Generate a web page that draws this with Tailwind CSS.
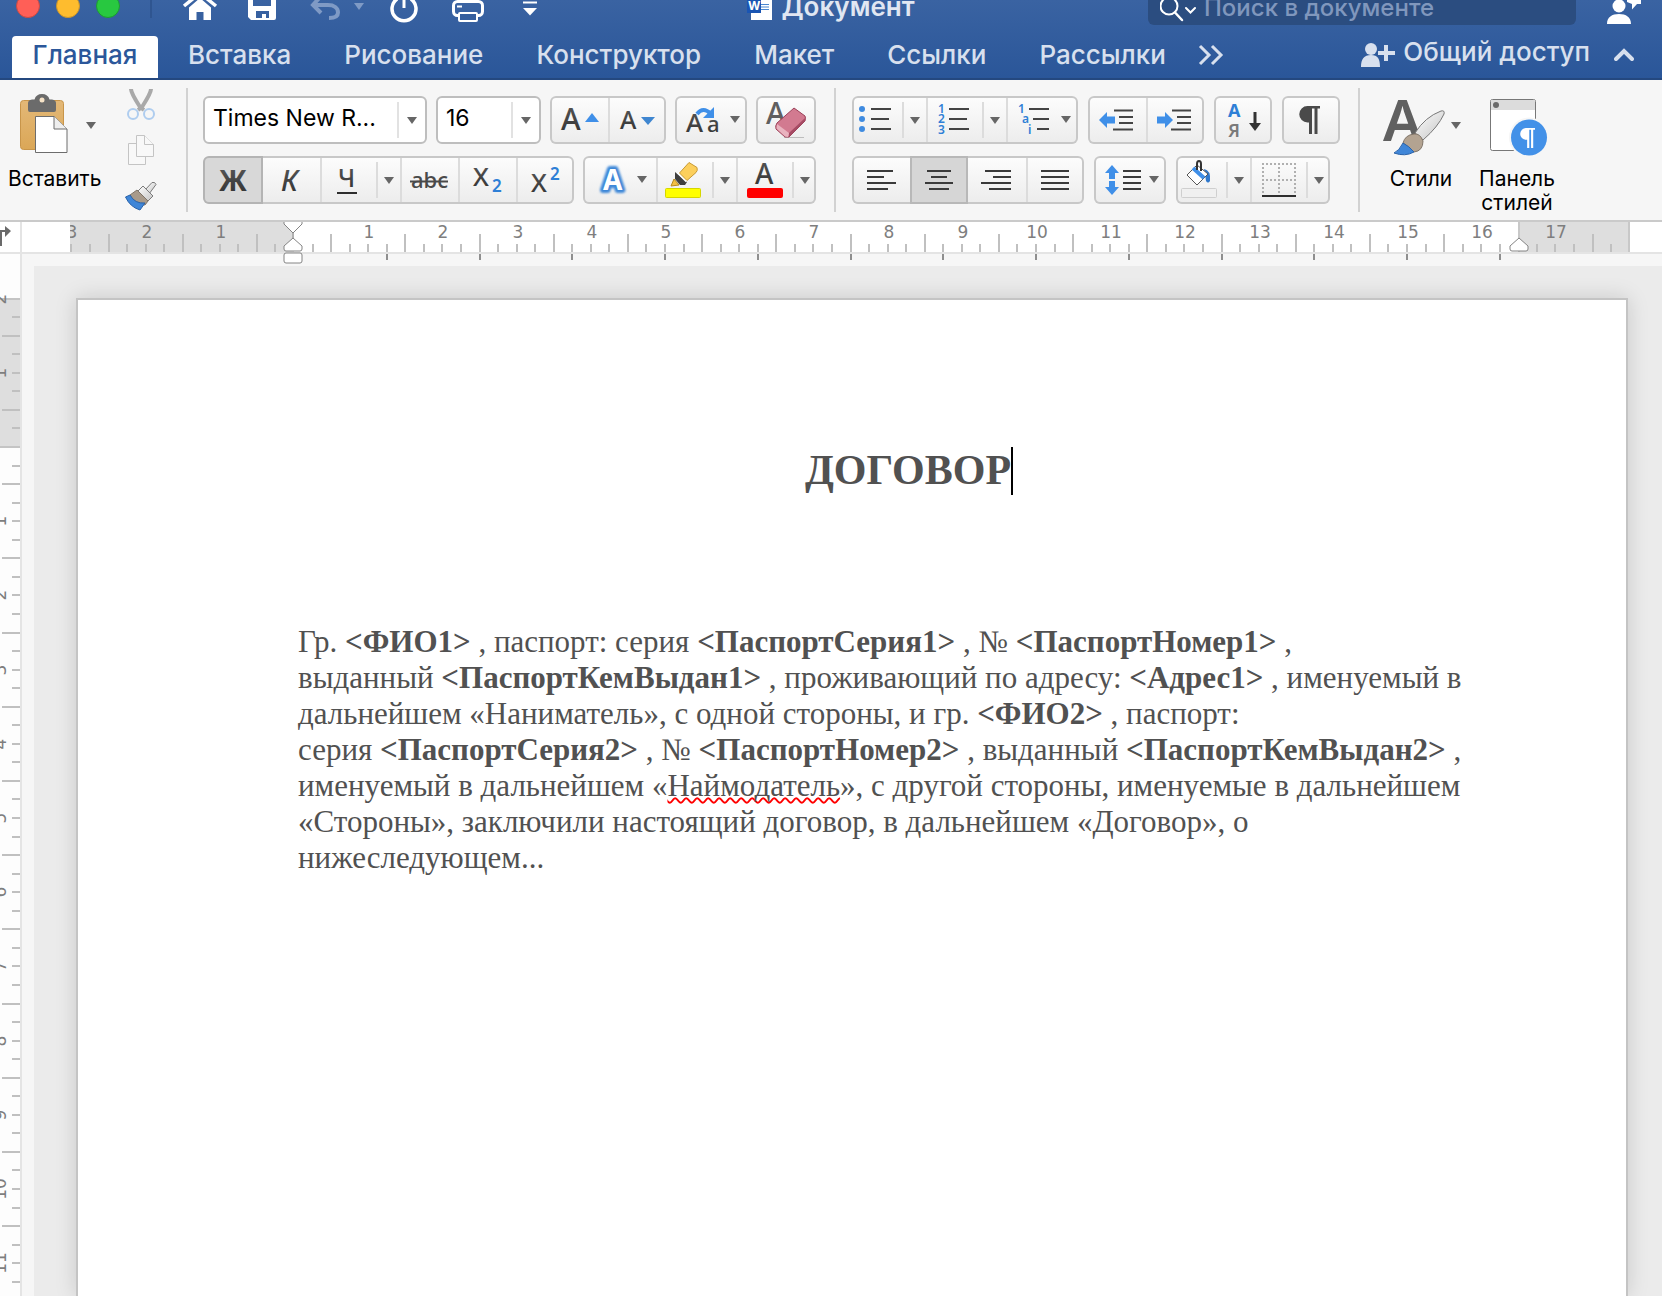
<!DOCTYPE html>
<html lang="ru">
<head>
<meta charset="utf-8">
<title>Документ</title>
<script src="https://cdn.jsdelivr.net/npm/@tailwindcss/browser@4"></script>
</head>
<body class="flex min-h-screen flex-col overflow-x-hidden bg-[#f6f6f6] font-['Inter','Noto_Sans',sans-serif] text-black">

<svg class="absolute size-0" aria-hidden="true">
  <defs>
    <linearGradient id="ink" x1="0" y1="0" x2="0" y2="1"><stop offset="0" stop-color="#5c5c5c"/><stop offset="1" stop-color="#2e2e2e"/></linearGradient>
    <linearGradient id="board" x1="0" y1="0" x2="0" y2="1"><stop offset="0" stop-color="#e3b877"/><stop offset="1" stop-color="#dba757"/></linearGradient>
    <linearGradient id="metal" x1="0" y1="0" x2="1" y2="1"><stop offset="0" stop-color="#ffffff"/><stop offset="1" stop-color="#c4c4c4"/></linearGradient>
    <filter id="glow" x="-50%" y="-50%" width="200%" height="200%"><feGaussianBlur stdDeviation="1"/></filter>
    <symbol id="caret" viewBox="0 0 10 7"><path d="M0 0h10L5 7z" fill="#666"/></symbol>
    <symbol id="pilcrow" viewBox="0 0 21 28"><path d="M21 0v2.500h-2.500V28h-3V2.500h-2.500V28H10V16.500H8.500a8.250 8.250 0 0 1 0-16.500z"/></symbol>
  </defs>
</svg>

<header class="flex h-20 flex-col overflow-hidden border-b-2 border-[#24487f] bg-linear-to-b from-[#3a63a2] to-[#2a5699] text-[#d8e0ee]">
  <div class="flex h-9 shrink-0 items-start">
    <div class="flex flex-1 items-start">
      <div class="flex w-[152px] items-start gap-4 border-r-2 border-[#2f5590] pl-4">
        <button aria-label="Закрыть" class="-mt-[6px] size-6 rounded-full border border-[#c94a43] bg-[#ff5f57]"></button>
        <button aria-label="Свернуть" class="-mt-[6px] size-6 rounded-full border border-[#c9942c] bg-[#febc2e]"></button>
        <button aria-label="Развернуть" class="-mt-[6px] size-6 rounded-full border border-[#1d9a32] bg-[#28c840]"></button>
      </div>
      <button aria-label="Домой" class="ml-[30px]"><svg width="36" height="24" fill="none"><path d="M2 6 18-7 34 6" stroke="#fff" stroke-width="3.500"/><path d="M7 7.500 18-2l11 9.500V20h-7.500v-8h-7v8H7z" fill="#fff"/></svg></button>
      <button aria-label="Сохранить" class="ml-[26px]"><svg width="36" height="24"><path fill="#fff" fill-rule="evenodd" d="M4-8h28v26a2 2 0 0 1-2 2H7l-3-3zM9-8V6h18V-8zM12 11v7h6v-4h4v4h3v-7z"/></svg></button>
      <button aria-label="Отменить" class="ml-[27px]"><svg width="36" height="24" fill="none" stroke="#7f9ac5" stroke-width="4"><path d="M7 5h14c6 0 10 3 10 7.500S27 18 22 18"/><path d="M14-4 6 5l8 8"/></svg></button>
      <button aria-label="Варианты отмены" class="ml-2"><svg width="16" height="24"><path d="M3 3h10L8 10z" fill="#7f9ac5"/></svg></button>
      <button aria-label="Повторить" class="ml-[19px]"><svg width="36" height="24" fill="none" stroke="#fff"><path d="M11-1a12 12 0 1 0 14 0" stroke-width="3.500"/><path d="M18-4V8" stroke-width="3"/></svg></button>
      <button aria-label="Печать" class="ml-7"><svg width="36" height="24"><rect x="3.500" y="1.500" width="29" height="14" rx="4" fill="none" stroke="#fff" stroke-width="3"/><path d="M7-4h22" stroke="#fff" stroke-width="6"/><rect x="9" y="13" width="18" height="8" rx="1" fill="#345e9e" stroke="#fff" stroke-width="2"/><path d="M7 6.500h5" stroke="#fff" stroke-width="2"/></svg></button>
      <button aria-label="Настроить панель" class="ml-[26px]"><svg width="36" height="24"><path d="M11 2.500h14" stroke="#fff" stroke-width="2"/><path d="M11 8h14l-7 7.500z" fill="#fff"/></svg></button>
    </div>
    <div class="flex items-start gap-2">
      <svg width="26" height="24"><rect x="4" y="-6" width="21" height="26" fill="#fff"/><path d="M14 4.500h8M14 7h8M14 9.500h8" stroke="#4a86d0" stroke-width="1"/><rect x="0" y="-4" width="14" height="17" fill="#1a55b3"/><text x="1" y="10" font-size="12" font-weight="700" fill="#fff" font-family="Inter">W</text></svg>
      <h1 class="text-[26px] leading-[14px] font-semibold text-[#e1e7f2]">Документ</h1>
    </div>
    <div class="flex flex-1 items-start justify-end">
      <label class="-mt-[10px] flex h-[35px] w-[428px] items-center gap-2 rounded-md bg-[#2b4d80] pl-3">
        <svg class="mt-1 shrink-0" width="36" height="30" fill="none" stroke="#fff" stroke-linecap="round"><circle cx="9" cy="11" r="8.500" stroke-width="2"/><path d="m15 17.500 7 7.500" stroke-width="2.500"/><path d="m26 13 4.500 4.500L35 13" stroke-width="2"/></svg>
        <input type="search" aria-label="Поиск в документе" placeholder="Поиск в документе" class="w-full bg-transparent text-[24px] leading-[30px] font-medium outline-none placeholder:text-[#8097bd]">
      </label>
      <button aria-label="Учётная запись" class="mr-[18px] ml-[30px]"><svg width="38" height="26" fill="#fff"><circle cx="13" cy="6" r="6.500"/><path d="M1 24c0-7 5-10 12-10s12 3 12 10zM21-4h14v8h-4l-5 5.500V4l-5-2z"/></svg></button>
    </div>
  </div>
  <nav class="flex h-11 shrink-0 items-start pl-3 text-[26px] leading-[37px] font-medium">
    <a href="#" aria-current="page" class="flex h-11 w-[146px] justify-center rounded-t-sm bg-white text-[#2b579a]">Главная</a>
    <a href="#" class="pr-[53px] pl-[30px]">Вставка</a>
    <a href="#" class="pr-[53px]">Рисование</a>
    <a href="#" class="pr-[53px]">Конструктор</a>
    <a href="#" class="pr-[53px]">Макет</a>
    <a href="#" class="pr-[53px]">Ссылки</a>
    <a href="#" class="pr-8">Рассылки</a>
    <button aria-label="Другие вкладки" class="h-9"><svg width="26" height="36" fill="none" stroke="currentColor" stroke-width="3"><path d="m2 10 9 9-9 9M14 10l9 9-9 9"/></svg></button>
    <a href="#" class="ml-auto flex gap-[7px] leading-[32px]"><svg width="36" height="36" fill="currentColor"><circle cx="11" cy="13" r="6"/><path d="M1 31c0-8 3-12 10-12s9 4 9 12zM18 15h6V9h4v6h7v4h-7v6h-4v-6h-6z"/></svg>Общий доступ</a>
    <button aria-label="Свернуть ленту" class="mr-7 ml-6"><svg width="20" height="36" fill="none" stroke="currentColor" stroke-width="4" stroke-linecap="round"><path d="m2 23 8-8 8 8"/></svg></button>
  </nav>
</header>

<div class="flex h-[142px] shrink-0 items-start border-b-2 border-[#cacaca] bg-[#f6f6f6] font-['Noto_Sans','Inter',sans-serif]">
  <button class="mt-[14px] ml-2 flex w-[94px] flex-col items-start font-['Inter',sans-serif] text-[21px] leading-6">
    <svg width="94" height="73">
      <rect x="12.500" y="6.500" width="43" height="49" rx="3" fill="url(#board)" stroke="#c8954a"/>
      <path d="M20 9q0-3 4-3.500h2.500Q28 0 34 0t7.500 5.500H44q4 .500 4 3.500v7q0 2-2 2H22q-2 0-2-2z" fill="#6b6b6b"/><circle cx="34" cy="6" r="2.500" fill="#f6e3c8"/>
      <path d="M27.500 22.500H46L59 35v23.500H27.500z" fill="#fff" stroke="#6d6d6d"/><path d="M46 22.500V35h13" fill="#eee" stroke="#6d6d6d"/>
      <path d="M78 28h10l-5 7z" fill="#666"/>
    </svg>Вставить</button>
  <div class="mt-2 ml-[23px] flex flex-col gap-[14px]">
    <button aria-label="Вырезать"><svg width="32" height="32" fill="none"><path d="M6 1q0 4 9 18l4 3M26 1q0 4-9 18l-4 3" stroke="#a9a9a9" stroke-width="4"/><circle cx="8" cy="26" r="5" stroke="#afcdef" stroke-width="2"/><circle cx="24" cy="26" r="5" stroke="#afcdef" stroke-width="2"/></svg></button>
    <button aria-label="Копировать"><svg width="32" height="32" fill="#f8f8f8" stroke="#c4c4c4"><path d="M3.500 9.500h17v21h-17z"/><path d="M11.500 1.500h8l9 9v12h-17z"/><path d="M19.500 1.500v9h9"/></svg></button>
    <button aria-label="Формат по образцу"><svg width="32" height="32"><path d="m20 10 7-7.500q3-1 4 2L24 14z" fill="url(#metal)" stroke="#7b7b7b"/><path d="m18 6 10 10-5 5-10-10z" fill="url(#metal)" stroke="#7b7b7b"/><path d="m12 10 11 11-3 4Q9 24 5 15z" fill="#a89a8a" stroke="#7f7468"/><path d="M5 15q5 9 15 8l-5 7Q5 27 .500 17z" fill="#3f86d8" stroke="#2a62a8"/></svg></button>
  </div>
  <div class="mt-2 ml-[29px] h-[124px] w-[2px] bg-[#d2d2d2]"></div>

  <div class="mt-4 ml-[15px] flex flex-col gap-3">
    <div class="flex gap-[9px]">
      <div class="relative h-12 w-[224px]">
        <select aria-label="Шрифт" class="size-full appearance-none rounded-md border-2 border-[#bebebe] bg-white pb-1 pl-2 font-['Inter',sans-serif] text-[23px]"><option>Times New R...</option></select>
        <span class="pointer-events-none absolute top-[6px] right-0 flex h-9 w-[30px] items-center border-l-2 border-[#e2e2e2] pl-[8px]"><svg class="h-[7px] w-[10px]"><use href="#caret"/></svg></span>
      </div>
      <div class="relative h-12 w-[105px]">
        <select aria-label="Размер шрифта" class="size-full appearance-none rounded-md border-2 border-[#bebebe] bg-white pb-1 pl-2 font-['Inter',sans-serif] text-[23px]"><option>16</option></select>
        <span class="pointer-events-none absolute top-[6px] right-0 flex h-9 w-[30px] items-center border-l-2 border-[#e2e2e2] pl-[8px]"><svg class="h-[7px] w-[10px]"><use href="#caret"/></svg></span>
      </div>
      <div class="flex h-12 rounded-md bg-linear-to-b from-[#fdfdfd] to-[#ececec] ring-2 ring-[#c8c8c8] ring-inset">
        <button aria-label="Увеличить шрифт"><svg width="58" height="48"><text x="11" y="34" font-size="30" font-weight="500" fill="url(#ink)">A</text><path d="m42 17 7 9H35z" fill="#3f8fe8"/></svg></button>
        <button aria-label="Уменьшить шрифт" class="my-[2px] border-l-2 border-[#dcdcdc]"><svg width="56" height="44"><text x="10" y="31" font-size="25" font-weight="500" fill="url(#ink)">A</text><path d="M31 19h14l-7 8z" fill="#3f86d0"/></svg></button>
      </div>
      <button aria-label="Регистр" class="h-12 rounded-md bg-linear-to-b from-[#fdfdfd] to-[#ececec] ring-2 ring-[#c8c8c8] ring-inset"><svg width="72" height="48"><text x="11" y="36" font-size="26" font-weight="500" fill="url(#ink)">A</text><text x="32" y="36" font-size="22" font-weight="500" fill="url(#ink)">a</text><path d="M22 18q6-8 14 0" fill="none" stroke="#3f8fe8" stroke-width="4"/><path d="M39 11v11H28z" fill="#3f8fe8"/><path d="M55 20h10l-5 7z" fill="#666"/></svg></button>
      <button aria-label="Очистить формат" class="h-12 rounded-md bg-linear-to-b from-[#fdfdfd] to-[#ececec] ring-2 ring-[#c8c8c8] ring-inset"><svg width="60" height="48"><text x="10" y="28" font-size="30" font-weight="500" fill="#5f5f5f">A</text><path d="M28 41.500h20" stroke="#bdbdbd"/><path d="m38 12 11 8q1 2 0 5L33 41h-4l-9-8q-1-3 1-6z" fill="#d27a90" stroke="#9b4058"/><path d="m21 28 12 9-1 4-3-.500-8.500-8z" fill="#e9b3bf"/><path d="m33 37 16-15v3L33 41z" fill="#a64b64"/></svg></button>
    </div>
    <div class="flex gap-[9px]">
      <div class="flex h-12 overflow-hidden rounded-md bg-linear-to-b from-[#fdfdfd] to-[#ececec] ring-2 ring-[#c8c8c8] ring-inset">
        <button aria-label="Полужирный" aria-pressed="true" class="rounded-l-md border-2 border-[#b4b4b4] bg-[#d8d8d8]"><svg width="56" height="44"><text x="14" y="33" font-size="28" font-weight="700" fill="url(#ink)">Ж</text></svg></button>
        <button aria-label="Курсив"><svg width="57" height="48"><text x="18" y="35" font-size="29" font-style="italic" font-weight="500" fill="url(#ink)">К</text></svg></button>
        <button aria-label="Подчёркнутый" class="my-[2px] border-l-2 border-[#dcdcdc]"><svg width="54" height="44"><text x="16" y="29" font-size="25" font-weight="500" fill="url(#ink)">Ч</text><path d="M15 35h20" stroke="#2e2e2e" stroke-width="2"/></svg></button>
        <button aria-label="Вид подчёркивания" class="my-[6px] border-l-2 border-[#dcdcdc] px-[6px]"><svg class="h-[7px] w-[10px]"><use href="#caret"/></svg></button>
        <button aria-label="Зачёркнутый" class="my-[2px] border-l-2 border-[#dcdcdc]"><svg width="56" height="44"><text x="9" y="30" font-size="22" font-weight="500" fill="#4a4a4a">abc</text><path d="M8 23.500h38" stroke="#4a4a4a" stroke-width="2"/></svg></button>
        <button aria-label="Подстрочный" class="my-[2px] border-l-2 border-[#dcdcdc]"><svg width="56" height="44"><text x="13" y="28" font-size="26" font-weight="500" fill="url(#ink)">X</text><text x="32" y="34" font-size="17" font-weight="600" fill="#2e7fd6">2</text></svg></button>
        <button aria-label="Надстрочный" class="my-[2px] border-l-2 border-[#dcdcdc]"><svg width="56" height="44"><text x="13" y="34" font-size="26" font-weight="500" fill="url(#ink)">X</text><text x="32" y="22" font-size="17" font-weight="600" fill="#2e7fd6">2</text></svg></button>
      </div>
      <div class="flex h-12 rounded-md bg-linear-to-b from-[#fdfdfd] to-[#ececec] ring-2 ring-[#c8c8c8] ring-inset">
        <button aria-label="Эффекты текста"><svg width="73" height="48"><text x="20" y="34" font-size="28" font-weight="700" fill="#3d87d8" stroke="#3d87d8" stroke-width="6" stroke-linejoin="round" filter="url(#glow)">A</text><text x="20" y="34" font-size="28" font-weight="700" fill="#fff">A</text><path d="M54 20h10l-5 7z" fill="#666"/></svg></button>
        <button aria-label="Цвет выделения" class="my-[2px] border-l-2 border-[#dcdcdc]"><svg width="54" height="44"><path d="m13 28 3-7 5 6z" fill="#f3c044" stroke="#b98a1e"/><path d="m17 14 12 10-2 3h-5l-5-6z" fill="#3f3f3f"/><path d="m19.500 14.500 9 9" stroke="#fff" stroke-width="2"/><path d="m31 4.500 8 5q1 3-1 5l-9 8-7.500-7.500z" fill="#fccf5c" stroke="#c89a34"/><rect x="7.500" y="30.500" width="35" height="9" rx="1" fill="#ff0" stroke="#d6d600"/></svg></button>
        <button aria-label="Выбрать цвет выделения" class="my-[6px] border-l-2 border-[#dcdcdc] px-[6px]"><svg class="h-[7px] w-[10px]"><use href="#caret"/></svg></button>
        <button aria-label="Цвет текста" class="my-[2px] border-l-2 border-[#dcdcdc]"><svg width="54" height="44"><text x="17" y="26" font-size="28" font-weight="500" fill="url(#ink)">A</text><rect x="9" y="30" width="36" height="10" rx="2" fill="#f00"/></svg></button>
        <button aria-label="Выбрать цвет текста" class="my-[6px] border-l-2 border-[#dcdcdc] px-[6px]"><svg class="h-[7px] w-[10px]"><use href="#caret"/></svg></button>
      </div>
    </div>
  </div>
  <div class="mt-2 ml-[18px] h-[124px] w-[2px] bg-[#d2d2d2]"></div>

  <div class="mt-4 ml-4 flex flex-col gap-3">
    <div class="flex gap-[10px]">
      <div class="flex h-12 rounded-md bg-linear-to-b from-[#fdfdfd] to-[#ececec] ring-2 ring-[#c8c8c8] ring-inset">
        <button aria-label="Маркеры"><svg width="50" height="48"><g fill="#3f8be0"><circle cx="10" cy="13" r="3"/><circle cx="10" cy="23" r="3"/><circle cx="10" cy="33" r="3"/></g><path d="M19 13h20M19 23h18M19 33h20" stroke="#444" stroke-width="2"/></svg></button>
        <button aria-label="Вид маркеров" class="my-[6px] border-l-2 border-[#dcdcdc] px-[6px]"><svg class="h-[7px] w-[10px]"><use href="#caret"/></svg></button>
        <button aria-label="Нумерация" class="my-[2px] border-l-2 border-[#dcdcdc]"><svg width="54" height="44"><g font-size="12" font-weight="600" fill="#2e7fd6"><text x="10" y="15">1</text><text x="10" y="25">2</text><text x="10" y="36">3</text></g><path d="M21 11h20M21 21h18M21 31h20" stroke="#444" stroke-width="2"/></svg></button>
        <button aria-label="Вид нумерации" class="my-[6px] border-l-2 border-[#dcdcdc] px-[6px]"><svg class="h-[7px] w-[10px]"><use href="#caret"/></svg></button>
        <button aria-label="Многоуровневый список" class="my-[2px] border-l-2 border-[#dcdcdc]"><svg width="70" height="44"><g font-size="12" font-weight="600" fill="#2e7fd6"><text x="10" y="15">1</text><text x="14" y="25">a</text><text x="20" y="36">i</text></g><path d="M21 11h20M25 21h16M29 31h12" stroke="#444" stroke-width="2"/><path d="M53 18h10l-5 7z" fill="#666"/></svg></button>
      </div>
      <div class="flex h-12 rounded-md bg-linear-to-b from-[#fdfdfd] to-[#ececec] ring-2 ring-[#c8c8c8] ring-inset">
        <button aria-label="Уменьшить отступ"><svg width="58" height="48"><path d="m11 24 8-8v4.500h8v7h-8V32z" fill="#3f8fe8"/><path d="M26 14.500h19M31 21h14M31 27h14M25 33.500h20" stroke="#444" stroke-width="2"/></svg></button>
        <button aria-label="Увеличить отступ" class="my-[2px] border-l-2 border-[#dcdcdc]"><svg width="56" height="44"><path d="m25 22-8-8v4.500H9v7h8V30z" fill="#3f8fe8"/><path d="M24 12.500h19M29 19h14M29 25h14M23 31.500h20" stroke="#444" stroke-width="2"/></svg></button>
      </div>
      <button aria-label="Сортировка" class="h-12 rounded-md bg-linear-to-b from-[#fdfdfd] to-[#ececec] ring-2 ring-[#c8c8c8] ring-inset"><svg width="58" height="48"><text x="14" y="21" font-size="18" font-weight="700" fill="#2e7fd6">А</text><text x="14" y="41" font-size="18" font-weight="600" fill="#7a7a7a">Я</text><path d="M39.500 16h3v11H47l-6 8-6-8h4.500z" fill="#333"/></svg></button>
      <button aria-label="Непечатаемые знаки" class="h-12 rounded-md bg-linear-to-b from-[#fdfdfd] to-[#ececec] ring-2 ring-[#c8c8c8] ring-inset"><svg width="58" height="48"><use href="#pilcrow" x="17" y="10" width="21" height="28" fill="#4a4a4a"/></svg></button>
    </div>
    <div class="flex gap-[10px]">
      <div class="flex h-12 rounded-md bg-linear-to-b from-[#fdfdfd] to-[#ececec] ring-2 ring-[#c8c8c8] ring-inset">
        <button aria-label="По левому краю"><svg width="58" height="48"><path d="M15 15h26M15 21h17M15 27h29M15 33h21" stroke="#3a3a3a" stroke-width="2"/></svg></button>
        <button aria-label="По центру" aria-pressed="true" class="border-2 border-[#b8b8b8] bg-[#d6d6d6]"><svg width="54" height="44"><path d="M15 13h24M19 19h16M13 25h28M17 31h20" stroke="#3a3a3a" stroke-width="2"/></svg></button>
        <button aria-label="По правому краю"><svg width="58" height="48"><path d="M17 15h26M25 21h18M13 27h30M21 33h22" stroke="#3a3a3a" stroke-width="2"/></svg></button>
        <button aria-label="По ширине" class="my-[2px] border-l-2 border-[#dcdcdc]"><svg width="56" height="44"><path d="M13 13h28M13 19h28M13 25h28M13 31h28" stroke="#3a3a3a" stroke-width="2"/></svg></button>
      </div>
      <button aria-label="Интервал" class="h-12 rounded-md bg-linear-to-b from-[#fdfdfd] to-[#ececec] ring-2 ring-[#c8c8c8] ring-inset"><svg width="72" height="48"><path d="m18 9 7 8h-4v6h-6v-6h-4zM18 39l7-8h-4v-6h-6v6h-4z" fill="#3f8fe8"/><path d="M29 15h18M29 21h18M29 27h18M29 33h18" stroke="#3a3a3a" stroke-width="2"/><path d="M55 20h10l-5 7z" fill="#666"/></svg></button>
      <div class="flex h-12 rounded-md bg-linear-to-b from-[#fdfdfd] to-[#ececec] ring-2 ring-[#c8c8c8] ring-inset">
        <button aria-label="Заливка"><svg width="50" height="48"><path d="M28 13q7 1 6 12-2 3-4 0l-1-7z" fill="#2f78cc"/><path d="m21 9 11 9-11 11-10-10z" fill="#fff" stroke="#555"/><path d="m17 12 11 10" stroke="#3f8fe8" stroke-width="4"/><path d="M21 14V8q0-3 2-3t2 3v7" fill="none" stroke="#333" stroke-width="2"/><rect x="5.500" y="32.500" width="35" height="9" rx="1" fill="#f0f0f0" stroke="#cfcfcf"/></svg></button>
        <button aria-label="Цвет заливки" class="my-[6px] border-l-2 border-[#dcdcdc] px-[6px]"><svg class="h-[7px] w-[10px]"><use href="#caret"/></svg></button>
        <button aria-label="Границы" class="my-[2px] border-l-2 border-[#dcdcdc]"><svg width="54" height="44"><path d="M10 6h34M10 22h34M11 5v32M27 5v32M43 5v32" stroke="#b0b0b0" stroke-width="2" stroke-dasharray="2 2" fill="none"/><path d="M10 38h34" stroke="#2e2e2e" stroke-width="2"/></svg></button>
        <button aria-label="Вид границ" class="my-[6px] border-l-2 border-[#dcdcdc] px-[6px]"><svg class="h-[7px] w-[10px]"><use href="#caret"/></svg></button>
      </div>
    </div>
  </div>
  <div class="mt-2 ml-[18px] h-[124px] w-[2px] bg-[#d2d2d2]"></div>

  <button class="mt-[14px] ml-[21px] flex w-20 flex-col items-center font-['Inter',sans-serif] text-[21px] leading-6"><svg width="80" height="73"><text x="2" y="47" font-size="58" font-weight="600" fill="#606060" font-family="Noto Sans">A</text><path d="M34 39q10-16 26-22 4-1 3 3-6 13-21 26z" fill="url(#metal)" stroke="#777"/><path d="M33 40q6-1 9 7 0 10-9 11l-11-9q2-8 11-9z" fill="#b3a391" stroke="#7f7468"/><path d="M22 49q6 3 11 9-9 5-20 1 5-2 9-10z" fill="#3f86d8" stroke="#2a62a8"/><path d="M70 28h10l-5 7z" fill="#666"/></svg>Стили</button>
  <button class="mt-[14px] ml-4 flex w-20 flex-col items-center font-['Inter',sans-serif] text-[21px] leading-6"><svg width="80" height="73"><rect x="13.500" y="5.500" width="45" height="51" rx="2" fill="#fff" stroke="#777"/><path d="M14 6h44v10H14z" fill="#dcdcdc"/><circle cx="19" cy="11" r="3" fill="#6a6a6a"/><circle cx="52" cy="43.500" r="20" fill="#f6f6f6"/><circle cx="52" cy="43.500" r="18" fill="#4391e8"/><use href="#pilcrow" x="43" y="34" width="15" height="20" fill="#fff"/></svg>Панель стилей</button>
</div>

<div class="flex h-8 shrink-0 bg-white">
  <button aria-label="Тип табуляции" class="w-[22px] border-r-2 border-b-2 border-[#e4e4e4]"><svg width="20" height="30"><path d="M1 24V9h6" fill="none" stroke="#6a6a6a" stroke-width="2"/><path d="m5 4 6 5-6 6z" fill="#6a6a6a"/></svg></button>
  <div class="relative flex flex-1 border-b-2 border-[#e4e4e4]">
    <div class="w-12"></div>
    <div class="w-56 bg-[#dedede]"></div>
    <div class="flex-1"></div>
    <div class="w-28 border-x-2 border-[#c8c8c8] bg-[#dedede]"></div>
    <div class="w-8"></div>
    <svg id="hruler" class="absolute top-0 left-12 h-10 w-[1562px]" fill="#7e7e7e" font-family="DejaVu Sans" font-size="17" text-anchor="middle"></svg>
    <svg class="absolute top-0 left-[260px]" width="24" height="44" fill="#fff" stroke="#848484"><path d="M2 0v2l9 9 9-9V0"/><path d="M11 10v7"/><path d="m11 16 9 8v3q0 2-2 2H4q-2 0-2-2v-3z"/><rect x="2" y="31" width="18" height="10" rx="2"/></svg>
    <svg class="absolute top-0 right-[131px]" width="24" height="32" fill="#fff" stroke="#848484"><path d="m12 16 9 8v3q0 2-2 2H5q-2 0-2-2v-3z"/></svg>
  </div>
</div>

<div class="flex flex-1">
  <div class="relative w-[22px] shrink-0 overflow-hidden border-r-2 border-[#e4e4e4] bg-[#fdfdfd] pt-11">
    <div class="h-[150px] border-y-2 border-[#c4c4c4] bg-[#dedede]"></div>
    <svg id="vruler" class="absolute top-0 left-0 h-full w-5" fill="#7e7e7e" font-family="DejaVu Sans" font-size="17" text-anchor="middle"></svg>
  </div>
  <div class="flex flex-1 pt-3 pl-3">
    <main class="flex flex-1 overflow-hidden bg-[#ebebeb] pt-8 pr-[34px] pl-[42px]">
      <article class="min-h-[998px] flex-1 border-2 border-b-0 border-[#c4c4c4] bg-white pt-[146px] pr-[108px] pl-[220px] font-['Liberation_Serif',serif] text-[31px] leading-9 text-[#515151] shadow-[0_0_20px_rgba(0,0,0,0.15)]">
        <h2 class="text-center text-[42px] leading-[48px] font-bold"><span class="relative">ДОГОВОР<span class="absolute top-0 left-full h-12 w-[2px] bg-black"></span></span></h2>
        <p class="mt-[130px] whitespace-nowrap">Гр. <b>&lt;ФИО1&gt;</b> , паспорт: серия <b>&lt;ПаспортСерия1&gt;</b> , № <b>&lt;ПаспортНомер1&gt;</b> ,<br>выданный <b>&lt;ПаспортКемВыдан1&gt;</b> , проживающий по адресу: <b>&lt;Адрес1&gt;</b> , именуемый в<br>дальнейшем «Наниматель», с одной стороны, и гр. <b>&lt;ФИО2&gt;</b> , паспорт:<br>серия <b>&lt;ПаспортСерия2&gt;</b> , № <b>&lt;ПаспортНомер2&gt;</b> , выданный <b>&lt;ПаспортКемВыдан2&gt;</b> ,<br>именуемый в дальнейшем «<span class="underline decoration-[#ff0000] decoration-wavy decoration-2 underline-offset-1 [text-decoration-skip-ink:none]">Наймодатель</span>», с другой стороны, именуемые в дальнейшем<br>«Стороны», заключили настоящий договор, в дальнейшем «Договор», о<br>нижеследующем...</p>
      </article>
    </main>
  </div>
</div>

<script>
  // One ruler unit in pixels; both rulers draw quarter marks with a long one at each half.
  const UNIT = 74.2;
  const line = (x, y, w, h, c) => `<rect x="${Math.round(x)}" y="${Math.round(y)}" width="${w}" height="${h}" fill="${c}"/>`;

  let h = '';
  for (let q = -12; q <= 71; q++) {
    const x = 223 + q * UNIT / 4;
    const half = (q + 400) % 4 === 2;
    if (q % 4 === 0 && q !== 0) h += `<text x="${Math.round(x) + 2}" y="16">${Math.abs(q / 4)}</text>`;
    if (q !== 0 && q !== 66) h += line(x, half ? 12 : 22, 2, half ? 18 : 8, '#c0c0c0');
  }
  for (let t = 1; t <= 13; t++) h += line(223 + t * UNIT * 1.25, 32, 2, 6, '#8e8e8e');
  document.getElementById('hruler').innerHTML = h;

  let v = '';
  for (let q = -8; q <= 45; q++) {
    const y = 192 + q * UNIT / 4;
    const half = (q + 400) % 4 === 2;
    if (q % 4 === 0 && q !== 0) v += `<text transform="translate(6 ${Math.round(y) + 1}) rotate(-90)">${Math.abs(q / 4)}</text>`;
    if (q !== 0 && q !== -8) v += line(half ? 2 : 12, y, half ? 18 : 8, 2, '#c0c0c0');
  }
  document.getElementById('vruler').innerHTML = v;
</script>
</body>
</html>
